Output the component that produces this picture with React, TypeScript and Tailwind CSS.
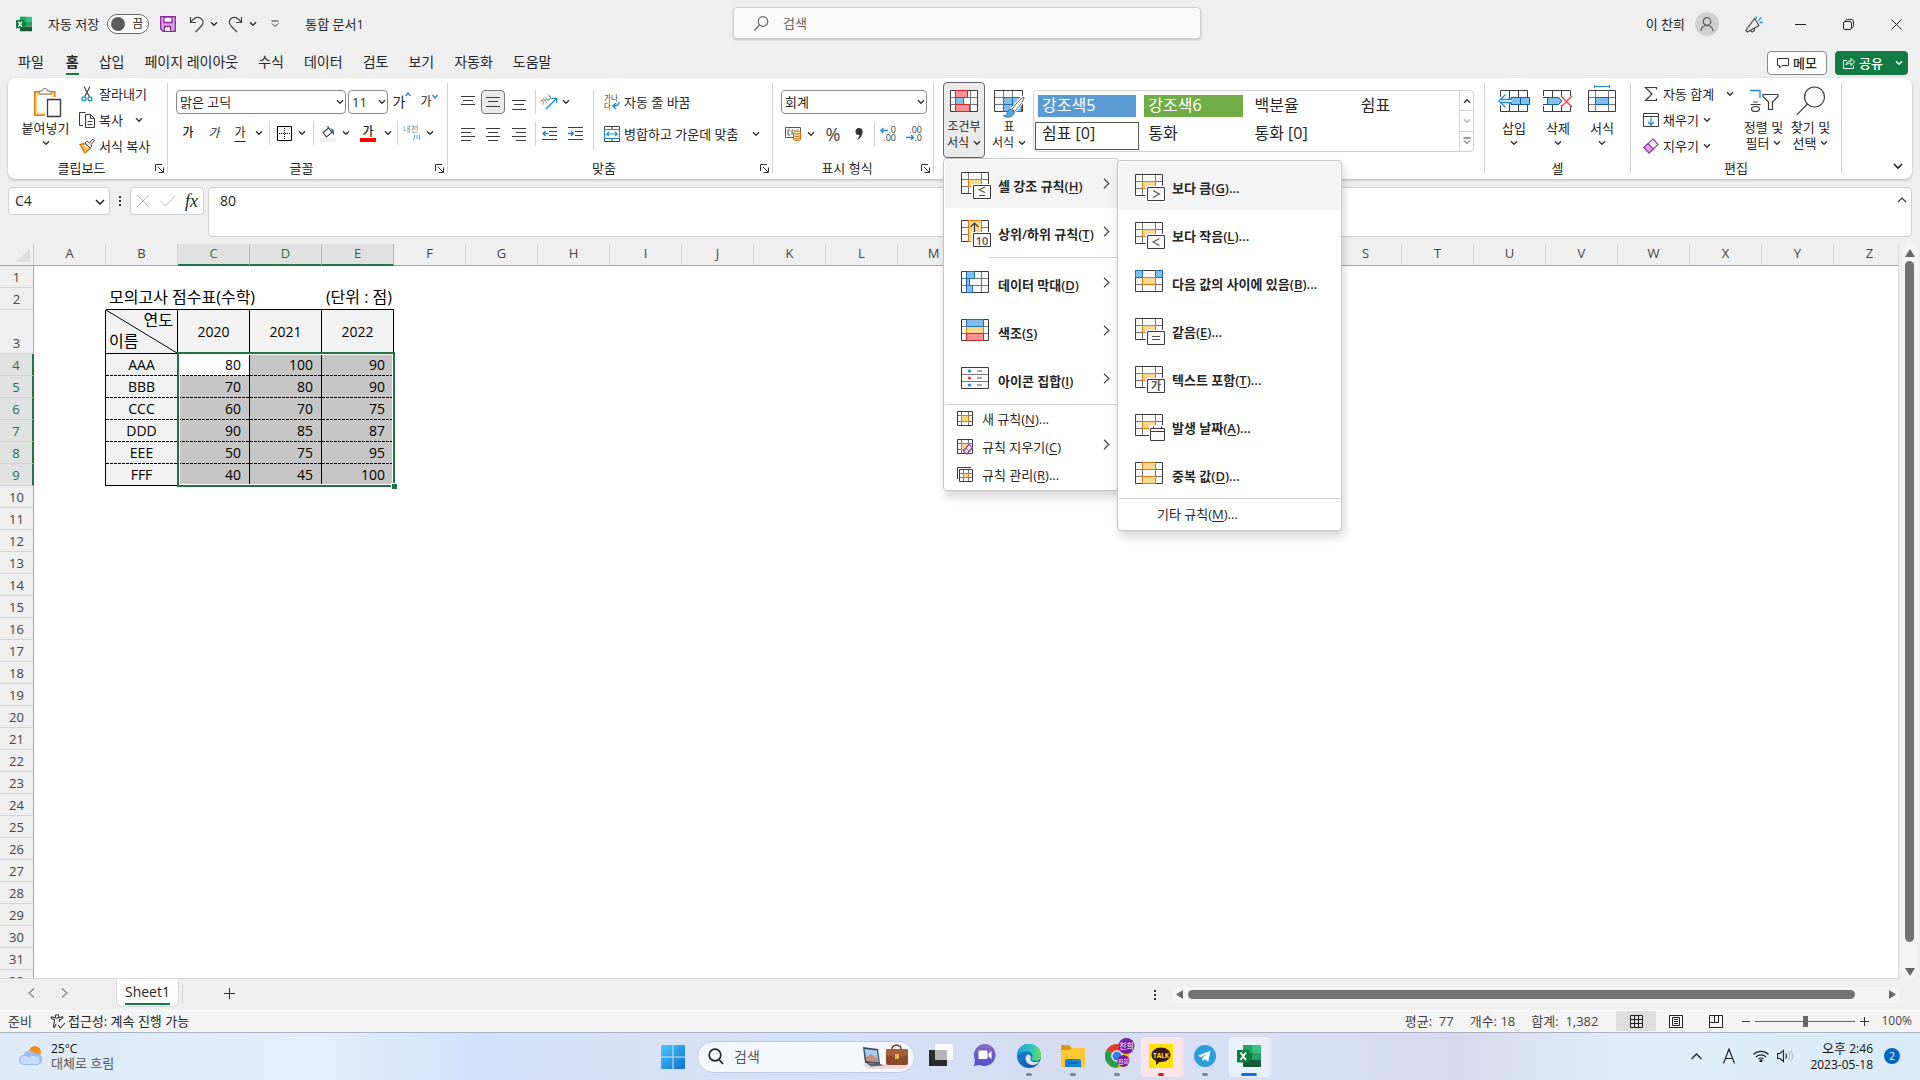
import React, { type ReactNode } from 'react';

/* ---------- small shared pieces ---------- */

function Chevron({ className = 'text-[#333]' }: { className?: string }) {
  return (
    <svg width="8" height="6" viewBox="0 0 8 6" className={`shrink-0 ${className}`} fill="none" stroke="currentColor" strokeWidth="1.4">
      <path d="M1 1.2 4 4.2 7 1.2" />
    </svg>
  );
}

function IconButton({ label, width = 'w-[26px]', children }: { label: string; width?: string; children: ReactNode }) {
  return (
    <button type="button" aria-label={label} className={`flex h-6 shrink-0 items-center justify-center ${width}`}>
      {children}
    </button>
  );
}

function Drop({ label, width = 'w-[14px]' }: { label: string; width?: string }) {
  return (
    <IconButton label={label} width={width}>
      <Chevron />
    </IconButton>
  );
}

function Divider({ className = 'h-6' }: { className?: string }) {
  return <span className={`w-px shrink-0 bg-[#d1d1d1] ${className}`} />;
}

function Group({ title, width, launcher = false, children }: { title: string; width: string; launcher?: boolean; children: ReactNode }) {
  return (
    <section aria-label={title} className={`flex shrink-0 ${width}`}>
      <div className="flex min-w-0 flex-1 flex-col">
        <div className="h-[82px]">{children}</div>
        <div className="flex h-4 items-center">
          <span className="flex-1 text-center">{title}</span>
          {launcher && (
            <button type="button" aria-label={`${title} 설정`} className="w-3">
              <svg width="9" height="9" viewBox="0 0 9 9" fill="none" stroke="#333">
                <path d="M.5 7V.5H7M3 3l5 5M8.500 3.500v5h-5" />
              </svg>
            </button>
          )}
        </div>
      </div>
      <Divider className="mt-[5px] h-[90px]" />
    </section>
  );
}

function Combo({ label, value, width }: { label: string; value: string; width: string }) {
  return (
    <span className={`relative flex h-6 shrink-0 ${width}`}>
      <select aria-label={label} className="h-6 w-full appearance-none rounded-[4px] border border-[#8a8a8a] bg-white pl-[3px] text-[13px] leading-5">
        <option>{value}</option>
      </select>
      <span className="pointer-events-none absolute top-[9px] right-[2px]">
        <Chevron />
      </span>
    </span>
  );
}

/* ---------- ribbon icons ---------- */

function PasteIcon() {
  return (
    <svg width="28" height="31" viewBox="0 0 28 31" fill="none" className="mt-[6px] ml-1">
      <path d="M.8 4.8h20v23.4H.8z" fill="#fbd98c" stroke="#e07b10" strokeWidth="1.5" />
      <path d="M3.5 8h14v17.500h-14z" fill="#fafafa" />
      <path d="M5 7V4h3.500a2.500 2.500 0 0 1 5 0H17v3z" fill="#fff" stroke="#777" />
      <path d="M12.500 11.500h14v18h-14z" fill="#fafafa" stroke="#fff" strokeWidth="3" />
      <path d="M13.500 12.500h13v17h-13z" fill="#fafafa" stroke="#3b3b3b" strokeWidth="1.3" />
    </svg>
  );
}

function CutIcon() {
  return (
    <svg width="16" height="16" viewBox="0 0 16 16" fill="none">
      <path d="M5 .5 10.500 11M11 .5 5.500 11" stroke="#444" strokeWidth="1.200" />
      <circle cx="5" cy="12.800" r="2" stroke="#1e8bd2" strokeWidth="1.300" />
      <circle cx="11" cy="12.800" r="2" stroke="#1e8bd2" strokeWidth="1.300" />
    </svg>
  );
}

function CopyIcon() {
  return (
    <svg width="16" height="16" viewBox="0 0 16 16" fill="none" stroke="#3b3b3b">
      <path d="M4 13.500H.5V.5h6" />
      <path d="M6.500 2.500h5l4 4v9h-9z" fill="#fafafa" />
      <path d="M11.500 2.500v4h4M8.500 9.500h5M8.500 12.500h5" />
    </svg>
  );
}

function BrushIcon() {
  return (
    <svg width="16" height="16" viewBox="0 0 16 16" fill="none">
      <path d="m1 6.500 5 8.500 5.500-5-5-4.500z" fill="#fbd98c" stroke="#d96c06" strokeWidth="1.300" />
      <path d="m3 10 2-1m-.5 3.500 2.500-2" stroke="#d96c06" />
      <path d="m6 5 2-2 2.500 2L14 1l1.500 1.500-3.500 4 1 1.500-2 2z" fill="#e8e8e8" stroke="#555" />
    </svg>
  );
}

function BordersIcon() {
  return (
    <svg width="15" height="15" viewBox="0 0 15 15" fill="none" stroke="#000">
      <path d="M.5.5h14v14H.5z" fill="#fafafa" />
      <path d="M7.500 2v11M2 7.500h11" strokeDasharray="1 1" />
    </svg>
  );
}

function FillIcon() {
  return (
    <svg width="16" height="17" viewBox="0 0 16 17" fill="none">
      <path d="M8.500 3 3 7.500 6.500 12 12 7.500 8 2V1" stroke="#444" strokeWidth="1.200" fill="#fafafa" />
      <path d="M10.500 3.500c3 0 4 2.500 3.500 6.500-1.500-.5-2-2-2-4z" fill="#1e6fb8" />
      <path d="M0 13h16v4H0z" fill="#efefef" />
    </svg>
  );
}

function Lines({ rows }: { rows: [number, number, number][] }) {
  return (
    <svg width="14" height="16" viewBox="0 0 14 16" stroke="#3b3b3b" strokeWidth="1">
      {rows.map(([x1, x2, y]) => (
        <path key={y} d={`M${x1} ${y + 0.5}H${x2}`} />
      ))}
    </svg>
  );
}

function IndentIcon({ out = false }: { out?: boolean }) {
  return (
    <svg width="15" height="14" viewBox="0 0 15 14" fill="none" stroke="#3b3b3b">
      <path d="M0 .5h15M7 4.500h8M7 8.500h8M0 12.500h15" />
      <path d={out ? 'M6.500 6.500H1M3.500 4 1 6.500 3.500 9' : 'M0 6.500h5.500M3 4l2.500 2.500L3 9'} stroke="#1e8bd2" strokeWidth="1.300" />
    </svg>
  );
}

function OrientationIcon() {
  return (
    <svg width="17" height="16" viewBox="0 0 17 16" fill="none" className="overflow-visible">
      <text x="0" y="9" fontSize="7" fill="#444" transform="rotate(-38 5 8)">가나</text>
      <path d="M5 15 15.500 4.500M11 4.300h4.700V9" stroke="#1e8bd2" strokeWidth="1.300" />
    </svg>
  );
}

function WrapIcon() {
  return (
    <svg width="16" height="16" viewBox="0 0 16 16" fill="none" className="overflow-visible">
      <text x="0" y="6.500" fontSize="7.500" fill="#333">가나</text>
      <text x="0" y="14.500" fontSize="7.500" fill="#333">다</text>
      <path d="M15 8c0 3-2 4-6 4M12 9l-3.200 3L12 15" stroke="#1e8bd2" strokeWidth="1.400" />
    </svg>
  );
}

function MergeIcon() {
  return (
    <svg width="16" height="16" viewBox="0 0 16 16" fill="none">
      <path d="M.5.5h15v15H.5zM8 .5v3M8 12.500v3" stroke="#3b3b3b" />
      <path d="M.5 3.500h15v9H.5z" fill="#fff" stroke="#1e8bd2" />
      <path d="M3 8h10M5 5.800 2.800 8 5 10.200M11 5.800 13.200 8 11 10.200" stroke="#1e8bd2" strokeWidth="1.200" />
    </svg>
  );
}

function CurrencyIcon() {
  return (
    <svg width="17" height="14" viewBox="0 0 17 14" fill="none">
      <path d="M.5.5h15v10H.5z" stroke="#555" />
      <path d="M5 3H3v5h2M8 3h-1v5M10 3v2M12.500 3h1" stroke="#555" />
      <path d="M8.500 5.500c0-2 7-2 7 0v7c0 1.500-7 1.500-7 0z" fill="#fbe3c0" stroke="#d96c06" />
      <path d="M8.500 6c1 1.300 6 1.300 7 0M8.500 8.500c1 1.300 6 1.300 7 0M8.500 11c1 1.300 6 1.300 7 0" stroke="#d96c06" />
    </svg>
  );
}

function DecimalIcon({ more = false }: { more?: boolean }) {
  return (
    <svg width="16" height="16" viewBox="0 0 16 16" fill="none" className="overflow-visible">
      <text x="16" y="7" fontSize="9" textAnchor="end" fill="#333">{more ? '.0' : '.00'}</text>
      <text x="16" y="15" fontSize="9" textAnchor="end" fill="#333">{more ? '.00' : '.0'}</text>
      <path d={more ? 'M8 4.500H1M3.500 2 1 4.500 3.500 7' : 'M0 11.500h7M5 9l2.500 2.500L5 14'} stroke="#1e8bd2" strokeWidth="1.300" />
    </svg>
  );
}

function GridLines() {
  return (
    <>
      <path d="M.5.5h27v21H.5z" fill="#fafafa" stroke="#3b3b3b" />
      <path d="M7.500 1v20M20.500 1v20M1 7.500h26M1 14.500h26" stroke="#777" />
    </>
  );
}

function ConditionalIcon() {
  return (
    <svg width="28" height="22" viewBox="0 0 28 22" fill="none">
      <GridLines />
      <path d="M13.500 1v20" stroke="#777" />
      <path d="M5.500 7.500h8v7h-8z" fill="#83beec" stroke="#1e6fb8" />
      <path d="M5.500.5h12v7h-12zM5.500 14.500h14v7h-14z" fill="#ff9199" stroke="#e02020" />
    </svg>
  );
}

function TableStyleIcon() {
  return (
    <svg width="31" height="28" viewBox="0 0 31 28" fill="none">
      <path d="M.5.500h28v21H.5z" fill="#fafafa" stroke="#3b3b3b" />
      <path d="M9.500 7.500h18v14h-18z" fill="#83beec" />
      <path d="M9.500 1v20M18.500 1v20M1 7.500h27M1 14.500h27" stroke="#777" />
      <path d="M9.500 7.500h18v14h-18zM18.500 7.500v14M9.500 14.500h18" stroke="#1e6fb8" />
      <path d="M29.500 7c-2.500 1-9.500 9-11.500 12.500l2.500 2C24 18 29.500 11 30 8z" fill="#fafafa" stroke="#fff" strokeWidth="3" />
      <path d="M29.500 7c-2.500 1-9.500 9-11.500 12.500l2.500 2C24 18 29.500 11 30 8z" fill="#fafafa" stroke="#555" />
      <path d="M17.500 19.500c-4-.5-4 3-5 5-.7 1-2 1-3 1 2 2.500 9 2.500 11-3z" fill="#5aa9e6" stroke="#1e6fb8" />
    </svg>
  );
}

function InsertIcon() {
  return (
    <svg width="32" height="22" viewBox="0 0 32 22" fill="none" className="mt-[9px]">
      <path d="M2.500.5h27v21h-27zM11.500.5v21M20.500.5v21" stroke="#3b3b3b" fill="#fafafa" />
      <path d="M13 7.500h18.500v7H13zM22.500 7.500v7" fill="#83beec" stroke="#0f5ea8" />
      <path d="M14 11H2M7.500 4.500 1 11l6.500 6.500" stroke="#fff" strokeWidth="4" />
      <path d="M14 9.500H3M14 12.500H3M7.500 4.500 1 11l6.500 6.500" stroke="#1e8bd2" strokeWidth="1.300" />
    </svg>
  );
}

function DeleteIcon() {
  return (
    <svg width="30" height="22" viewBox="0 0 30 22" fill="none" className="mt-[9px]">
      <path d="M.5 6V.5h27V6M.5 16v5.500h27V16M9.500.5V7M18.500.5V7M9.500 15v6.500M18.500 15v6.500" stroke="#3b3b3b" />
      <path d="M0 7.500h5M0 14.500h5" stroke="#3b3b3b" />
      <path d="M4.500 7.500h11l3.500 3.500-3.500 3.500h-11z" fill="#83beec" stroke="#0f5ea8" />
      <path d="m18 6 11 11M29 6 18 17" stroke="#f04f56" strokeWidth="1.500" />
    </svg>
  );
}

function FormatIcon() {
  return (
    <svg width="28" height="27" viewBox="0 0 28 27" fill="none" className="mt-1">
      <path d="M6 1.500h16M6.500 0v3M21.500 0v3" stroke="#1e8bd2" />
      <path d="M.5 5.500h27v21H.5z" fill="#fafafa" stroke="#3b3b3b" />
      <path d="M7.500 6v20M20.500 6v20M1 12.500h26M1 19.500h26" stroke="#777" />
      <path d="M7.500 12.500h13v7h-13z" fill="#83beec" stroke="#0f5ea8" />
    </svg>
  );
}

function SigmaIcon() {
  return (
    <svg width="16" height="16" viewBox="0 0 16 16" fill="none" stroke="#3b3b3b" strokeWidth="1.200">
      <path d="M13.500 3.500v-2h-11L9 8l-6.500 6.500h11v-2" />
    </svg>
  );
}

function FillDownIcon() {
  return (
    <svg width="16" height="16" viewBox="0 0 16 16" fill="none">
      <path d="M.5 1.500h15v13H.5zM.5 4.500h15" stroke="#3b3b3b" />
      <path d="M8 5.500v7M5 10l3 3 3-3" stroke="#1e8bd2" strokeWidth="1.300" />
    </svg>
  );
}

function EraserIcon() {
  return (
    <svg width="16" height="16" viewBox="0 0 16 16" fill="none" stroke="#9a3fa6" strokeWidth="1.200">
      <path d="M10 1 15 6.500 6 15 1 9.500z" fill="#fff" />
      <path d="M5 5.500 10.500 11 6 15 1 9.500z" fill="#d9a3e0" />
    </svg>
  );
}

function SortFilterIcon() {
  return (
    <svg width="30" height="25" viewBox="0 0 30 25" fill="none" className="mt-[7px]">
      <path d="M1 2.500h10V10" stroke="#1e8bd2" strokeWidth="1.300" />
      <path d="M4 14h5M1.500 16.500h10" stroke="#3b3b3b" />
      <ellipse cx="6.500" cy="21" rx="4" ry="2.500" stroke="#3b3b3b" strokeWidth="1.200" />
      <path d="M14 6.500h15v2L23.500 14v7.500h-4V14L14 8.500z" stroke="#3b3b3b" strokeWidth="1.200" fill="#fafafa" />
    </svg>
  );
}

function FindIcon() {
  return (
    <svg width="30" height="30" viewBox="0 0 30 30" fill="none" stroke="#3b3b3b" strokeWidth="1.200" className="mt-[5px]">
      <circle cx="18.500" cy="11" r="10" fill="#fafafa" />
      <path d="M11.500 18 .8 28.800" />
    </svg>
  );
}

/* ---------- menu icons ---------- */

type MenuArt = 'gt' | 'lt' | 'le' | 'eq' | 'text' | 'date' | 'ten' | 'bars' | 'scales' | 'icons' | 'between' | 'dup';

function MenuIcon({ kind }: { kind: MenuArt }) {
  const boxed = ['gt', 'lt', 'le', 'eq', 'text', 'date'].includes(kind);
  const glyph: Partial<Record<MenuArt, string>> = {
    gt: 'm18 16.500 6.500 3.500-6.500 3.500',
    lt: 'm24.500 16.500-6.500 3.500 6.500 3.500',
    le: 'm24 15-6 2.700 6 2.700M18 23.500h6',
    eq: 'M17 18.500h8M17 21.500h8',
  };
  return (
    <svg width="31" height="28" viewBox="0 0 31 28" fill="none" className="shrink-0">
      <GridLines />
      {boxed && <path d="M7.500 7.500h13v7h-13z" fill="#fbd98c" stroke="#e07b10" />}
      {kind === 'ten' && (
        <>
          <path d="M7.500.5h13v21h-13z" fill="#fbd98c" stroke="#e07b10" />
          <path d="M13.500 12V3M9.500 7l4-4 4 4" stroke="#3b3b3b" strokeWidth="1.200" />
        </>
      )}
      {(boxed || kind === 'ten') && kind !== 'date' && (
        <>
          <path d="M10.500 12h20v16h-20z" fill="#fff" />
          <path d="M12.500 13.500h17v13h-17z" fill="#fafafa" stroke="#3b3b3b" />
        </>
      )}
      {glyph[kind] && <path d={glyph[kind]} stroke="#555" strokeWidth="1.100" />}
      {kind === 'ten' && <text x="21" y="24.500" fontSize="11" textAnchor="middle" fill="#555">10</text>}
      {kind === 'text' && <text x="21" y="24" fontSize="11" textAnchor="middle" fill="#555">가</text>}
      {kind === 'date' && (
        <>
          <path d="M14 11h17v17H14z" fill="#fff" />
          <path d="M15.500 14.500h14v12h-14zM15.500 17.500h14M18.500 12.500v2M26.500 12.500v2" fill="#fafafa" stroke="#3b3b3b" />
        </>
      )}
      {kind === 'bars' && <path d="M5.500.5h8v7h-8zM5.500 7.500h3v7h-3zM5.500 14.500h6v7h-6z" fill="#83beec" stroke="#1e6fb8" />}
      {kind === 'scales' && (
        <>
          <path d="M5.500 7.500h17v7h-17z" fill="#fbd98c" stroke="#e07b10" />
          <path d="M5.500.5h17v7h-17z" fill="#83beec" stroke="#1e6fb8" />
          <path d="M5.500 14.500h17v7h-17z" fill="#ff9199" stroke="#e02020" />
        </>
      )}
      {kind === 'icons' && (
        <>
          <path d="M5 1h16v6H5zM5 8h16v6H5zM5 15h16v6H5z" fill="#fafafa" />
          <path d="M16 4h5M16 11h5M16 18h5" stroke="#555" />
          <circle cx="8.500" cy="4" r="1.600" fill="#1e8bd2" />
          <circle cx="8.500" cy="11" r="1.600" fill="#e23b3b" />
          <circle cx="8.500" cy="18" r="1.600" fill="#1e8bd2" />
        </>
      )}
      {kind === 'between' && (
        <>
          <path d="M.5.5h7v7h-7zM20.500.5h7v7h-7z" fill="#83beec" stroke="#1e6fb8" />
          <path d="M7.500 7.500h13v7h-13z" fill="#fbd98c" stroke="#e07b10" />
        </>
      )}
      {kind === 'dup' && <path d="M7.500.5h13v7h-13zM7.500 14.500h13v7h-13z" fill="#fbd98c" stroke="#e07b10" />}
    </svg>
  );
}

function SmallRuleIcon({ kind }: { kind: 'new' | 'clear' | 'manage' }) {
  const inset = kind === 'manage' ? 2 : 0;
  return (
    <svg width="16" height="16" viewBox="0 0 16 16" fill="none" className="shrink-0">
      {inset > 0 && <path d="M.5 12V.5H14" stroke="#3b3b3b" />}
      <path d={`M${inset + 0.5} ${inset + 0.5}H15.500V14.500H${inset + 0.5}z`} fill="#fafafa" stroke="#3b3b3b" />
      <path d={`M${inset + 4.5} ${inset + 1}V14M11.500 ${inset + 1}V14M${inset + 1} ${inset + 4.5}H15M${inset + 1} 10.500H15`} stroke="#777" />
      <path d={`M${inset + 4.5} ${inset + 4.5}H11.500V10.500H${inset + 4.5}z`} fill="#fbd98c" stroke="#e07b10" />
      {kind === 'clear' && <path d="m12 5.500 3.500 3L10 15l-3.500-3z" fill="#fff" stroke="#9a3fa6" strokeWidth="1.300" />}
      {kind === 'clear' && <path d="m9 9 3 3" stroke="#9a3fa6" />}
    </svg>
  );
}

function MenuText({ text, hot, more }: { text: string; hot: string; more?: boolean }) {
  return (
    <span className="whitespace-nowrap">
      {text}(<u className="underline-offset-2">{hot}</u>){more && '...'}
    </span>
  );
}

function MenuArrow() {
  return (
    <svg width="7" height="11" viewBox="0 0 7 11" fill="none" stroke="#444" strokeWidth="1.200" className="mr-[7px] mb-[5px] ml-auto">
      <path d="m1 .8 4.800 4.700L1 10.200" />
    </svg>
  );
}

const RULE_MENU: { art: MenuArt; text: string; hot: string }[] = [
  { art: 'le', text: '셀 강조 규칙', hot: 'H' },
  { art: 'ten', text: '상위/하위 규칙', hot: 'T' },
  { art: 'bars', text: '데이터 막대', hot: 'D' },
  { art: 'scales', text: '색조', hot: 'S' },
  { art: 'icons', text: '아이콘 집합', hot: 'I' },
];

const HIGHLIGHT_MENU: { art: MenuArt; text: string; hot: string }[] = [
  { art: 'gt', text: '보다 큼', hot: 'G' },
  { art: 'lt', text: '보다 작음', hot: 'L' },
  { art: 'between', text: '다음 값의 사이에 있음', hot: 'B' },
  { art: 'eq', text: '같음', hot: 'E' },
  { art: 'text', text: '텍스트 포함', hot: 'T' },
  { art: 'date', text: '발생 날짜', hot: 'A' },
  { art: 'dup', text: '중복 값', hot: 'D' },
];

function HighlightMenu() {
  return (
    <div role="menu" className="absolute top-px left-[173px] z-30 w-[225px] rounded-[4px] border border-[#c6c6c6] bg-white p-px shadow-[2px_6px_10px_rgba(0,0,0,0.16)]">
      {HIGHLIGHT_MENU.map((item, i) => (
        <button key={item.hot} type="button" role="menuitem" className={`flex h-12 w-full items-center gap-[6px] pt-1 pl-4 font-semibold ${i === 0 ? 'bg-[#f4f4f4]' : ''}`}>
          <MenuIcon kind={item.art} />
          <MenuText text={item.text} hot={item.hot} more />
        </button>
      ))}
      <hr className="border-[#d1d1d1]" />
      <button type="button" role="menuitem" className="flex h-[30px] w-full items-center pl-[38px]">
        <MenuText text="기타 규칙" hot="M" more />
      </button>
    </div>
  );
}

function RuleMenu() {
  return (
    <div role="menu" className="absolute top-[76px] left-0 z-20 w-[176px] rounded-[4px] border border-[#c6c6c6] bg-white p-px shadow-[2px_6px_10px_rgba(0,0,0,0.16)]">
      {RULE_MENU.map((item, i) => (
        <React.Fragment key={item.hot}>
          {i === 2 && <hr className="my-px ml-11 border-[#d1d1d1]" />}
          <button type="button" role="menuitem" className={`flex h-12 w-full items-center gap-[6px] pt-1 pl-4 font-semibold ${i === 0 ? 'bg-[#f4f4f4]' : ''}`}>
            <MenuIcon kind={item.art} />
            <MenuText text={item.text} hot={item.hot} />
            <MenuArrow />
          </button>
        </React.Fragment>
      ))}
      <hr className="mt-px border-[#d1d1d1]" />
      <button type="button" role="menuitem" className="flex h-7 w-full items-center gap-[9px] pl-3">
        <SmallRuleIcon kind="new" />
        <MenuText text="새 규칙" hot="N" more />
      </button>
      <button type="button" role="menuitem" className="flex h-7 w-full items-center gap-[9px] pl-3">
        <SmallRuleIcon kind="clear" />
        <MenuText text="규칙 지우기" hot="C" />
        <MenuArrow />
      </button>
      <button type="button" role="menuitem" className="flex h-7 w-full items-center gap-[9px] pl-3">
        <SmallRuleIcon kind="manage" />
        <MenuText text="규칙 관리" hot="R" more />
      </button>
      <HighlightMenu />
    </div>
  );
}

/* ---------- title bar and tabs ---------- */

function ExcelLogo({ size }: { size: number }) {
  return (
    <svg width={size} height={size} viewBox="0 0 24 24" className="shrink-0">
      <path d="M6 1h9v7.500H6z" fill="#21a366" />
      <path d="M15 1h8a1 1 0 0 1 1 1v6.500h-9z" fill="#33c481" />
      <path d="M6 8.500h9V16H6z" fill="#107c41" />
      <path d="M15 8.500h9V16h-9z" fill="#21a366" />
      <path d="M6 16h18v6a1 1 0 0 1-1 1H7a1 1 0 0 1-1-1z" fill="#185c37" />
      <rect y="6" width="12.500" height="12.500" rx="1" fill="#107c41" />
      <path d="m3.500 8.500 5.500 7.500M9 8.500 3.500 16" stroke="#fff" strokeWidth="1.900" />
    </svg>
  );
}

function TitleBar() {
  return (
    <header className="flex h-12 shrink-0 items-center">
      <div className="flex flex-1 items-center pl-4">
        <ExcelLogo size={16} />
        <label className="ml-4 flex items-center gap-2">
          자동 저장
          <input type="checkbox" role="switch" className="sr-only" />
          <span className="flex h-5 w-[42px] items-center justify-between rounded-full border border-[#666] bg-white pr-[5px] pl-[3px] text-xs leading-4">
            <span className="h-[14px] w-[14px] rounded-full bg-[#5c5c5c]" />끔
          </span>
        </label>
        <button type="button" aria-label="저장" className="ml-[11px]">
          <svg width="16" height="16" viewBox="0 0 16 16" fill="none" stroke="#8b2c9b" strokeWidth="1.300">
            <path d="M.7.7h14.600v14.600H3L.7 13z" fill="#d99fe2" />
            <path d="M4 1h8v5.500H4zM4.500 15v-4.500h6V15" fill="#fff" />
          </svg>
        </button>
        <button type="button" aria-label="실행 취소" className="ml-[13px] flex items-center gap-[6px]">
          <svg width="15" height="17" viewBox="0 0 15 17" fill="none" stroke="#444" strokeWidth="1.200">
            <path d="M1.500 1v5.500H7M1.800 6.300C5 2 9 .5 12 2.500c3 2.500 2.500 5.500 0 8L6.500 16" />
          </svg>
          <Chevron />
        </button>
        <button type="button" aria-label="다시 실행" className="ml-[10px] flex items-center gap-[6px]">
          <svg width="15" height="17" viewBox="0 0 15 17" fill="none" stroke="#444" strokeWidth="1.200">
            <path d="M13.500 1v5.500H8M13.200 6.300C10 2 6 .5 3 2.500.5 5 1 7.500 3 10l6 6" />
          </svg>
          <Chevron />
        </button>
        <button type="button" aria-label="빠른 실행 도구 모음 사용자 지정" className="ml-[14px]">
          <svg width="8" height="8" viewBox="0 0 8 8" fill="none" stroke="#333">
            <path d="M.5 1h7M1 3.500l3 3 3-3" />
          </svg>
        </button>
        <h1 className="ml-[26px]">통합 문서1</h1>
      </div>
      <label className="mb-[2px] ml-4 flex h-8 w-[468px] items-center rounded-[4px] border border-[#d0d0d0] bg-[#fafafa] pl-5 shadow-[0_1px_2px_rgba(0,0,0,0.2)]">
        <svg width="15" height="15" viewBox="0 0 15 15" fill="none" stroke="#666" strokeWidth="1.200">
          <circle cx="9" cy="5.500" r="4.800" />
          <path d="M5.500 9 .5 14.500" />
        </svg>
        <input type="search" aria-label="검색" placeholder="검색" className="ml-[14px] flex-1 bg-transparent outline-none placeholder:text-[#666]" />
      </label>
      <div className="flex flex-1 items-center justify-end pr-[18px]">
        <span>이 찬희</span>
        <button type="button" aria-label="계정" className="ml-[10px] flex h-6 w-6 justify-center rounded-full bg-[#d0d0d0] pt-[5px]">
          <svg width="14" height="14" viewBox="0 0 14 14" fill="none" stroke="#555" strokeWidth="1.200">
            <circle cx="7" cy="4.500" r="3.800" />
            <path d="M.8 14C1.500 10.500 4 8.500 7 8.500s5.500 2 6.200 5.500" />
          </svg>
        </button>
        <button type="button" aria-label="새로운 기능" className="ml-[26px]">
          <svg width="18" height="17" viewBox="0 0 18 17" fill="none" stroke="#444" strokeWidth="1.100">
            <path d="M9.500 2.500.8 14.500 2.500 16 14 9.500zM5.500 14.500c1.500 2.500 4.500 1 4-2" />
            <path d="M11.500 3 11.200.5M13.500 4.500 16.500 1.500M14.500 6.500h3" stroke="#1e8bd2" strokeWidth="1.300" />
          </svg>
        </button>
        <button type="button" aria-label="최소화" className="ml-8">
          <svg width="11" height="11" viewBox="0 0 11 11" stroke="#222"><path d="M0 5.500h11" /></svg>
        </button>
        <button type="button" aria-label="이전 크기로 복원" className="ml-[37px]">
          <svg width="11" height="11" viewBox="0 0 11 11" fill="none" stroke="#222">
            <rect x=".5" y="2.500" width="8" height="8" rx="1.500" />
            <path d="M2.500 2.300C2.500 1 3.300.5 4.500.5H8c1.600 0 2.500.9 2.500 2.500v3.500c0 1.200-.5 2-1.800 2" />
          </svg>
        </button>
        <button type="button" aria-label="닫기" className="ml-[37px]">
          <svg width="11" height="11" viewBox="0 0 11 11" stroke="#222"><path d="m.5.5 10 10M10.500.5l-10 10" /></svg>
        </button>
      </div>
    </header>
  );
}

const TABS = ['파일', '홈', '삽입', '페이지 레이아웃', '수식', '데이터', '검토', '보기', '자동화', '도움말'];

function TabRow() {
  return (
    <nav className="flex h-[30px] shrink-0 items-center pr-3 pl-[18px] text-sm">
      <div role="tablist" className="flex h-full flex-1 gap-5">
        {TABS.map((tab) => (
          <button
            key={tab}
            type="button"
            role="tab"
            aria-selected={tab === '홈'}
            className={`flex h-[27px] items-center border-b-2 pt-[3px] leading-5 first:mr-[2px] ${tab === '홈' ? 'border-[#107c41] font-semibold' : 'border-transparent'}`}
          >
            {tab}
          </button>
        ))}
      </div>
      <button type="button" className="flex h-6 w-[60px] items-center justify-center gap-1 rounded-[4px] border border-[#8a8a8a] bg-white text-[13px] font-medium">
        <svg width="12" height="11" viewBox="0 0 12 11" fill="none" stroke="#333"><path d="M.5.5h11v7H5l-2.500 2.500V7.500h-2z" /></svg>
        메모
      </button>
      <button type="button" className="ml-2 flex h-6 w-[73px] items-center rounded-[4px] bg-[#107c41] pl-2 text-[13px] font-medium text-white">
        <svg width="12" height="12" viewBox="0 0 12 12" fill="none" stroke="#fff">
          <path d="M4 3.500H.5v8h10v-3M3 8c.5-3 2-4 5-4V1.500L11.500 5 8 8.500V6C6 6 4.500 6.500 3 8z" />
        </svg>
        <span className="ml-1">공유</span>
        <Chevron className="ml-3 text-white" />
      </button>
    </nav>
  );
}

/* ---------- ribbon ---------- */

function BigButton({ icon, lines, width, inlineDrop = false }: { icon: ReactNode; lines: string[]; width: string; inlineDrop?: boolean }) {
  return (
    <button type="button" className={`flex shrink-0 flex-col items-center ${width}`}>
      <span className={`flex items-start justify-center ${inlineDrop ? 'h-[38px]' : 'h-[39px]'}`}>{icon}</span>
      {lines.map((line, i) => (
        <span key={line} className="flex h-4 items-center gap-1 whitespace-nowrap">
          {line}
          {inlineDrop && i === lines.length - 1 && <Chevron />}
        </span>
      ))}
      {!inlineDrop && (
        <span className="flex h-[14px] items-center">
          <Chevron />
        </span>
      )}
    </button>
  );
}

function StyleCell({ name, tone }: { name: string; tone: string }) {
  return (
    <button type="button" className={`flex text-base leading-5 ${tone}`}>
      {name}
    </button>
  );
}

function Ribbon() {
  return (
    <div className="mx-2 flex h-[101px] shrink-0 rounded-lg bg-white shadow-[0_1px_3px_rgba(0,0,0,0.25)]">
      <Group title="클립보드" width="w-[160px]" launcher>
        <div className="flex pt-[3px]">
          <BigButton icon={<PasteIcon />} lines={['붙여넣기']} width="w-[71px] pl-1" />
          <div className="flex flex-col">
            <button type="button" className="flex h-[26px] items-center gap-1"><CutIcon />잘라내기</button>
            <button type="button" className="flex h-[26px] items-center gap-1"><CopyIcon />복사<span className="ml-2"><Chevron /></span></button>
            <button type="button" className="flex h-[26px] items-center gap-1"><BrushIcon />서식 복사</button>
          </div>
        </div>
      </Group>

      <Group title="글꼴" width="w-[280px]" launcher>
        <div className="flex items-center gap-[2px] pt-3 pl-2">
          <Combo label="글꼴" value="맑은 고딕" width="w-[170px]" />
          <Combo label="글꼴 크기" value="11" width="w-[40px]" />
          <IconButton label="글꼴 크기 크게" width="w-6">
            <span className="flex items-start text-sm">가<svg width="6" height="5" viewBox="0 0 6 5" fill="none" stroke="#1e8bd2" strokeWidth="1.300"><path d="M.5 4 3 1l2.500 3" /></svg></span>
          </IconButton>
          <IconButton label="글꼴 크기 작게">
            <span className="flex items-start text-xs">가<svg width="6" height="5" viewBox="0 0 6 5" fill="none" stroke="#1e8bd2" strokeWidth="1.300"><path d="M.5 1 3 4l2.500-3" /></svg></span>
          </IconButton>
        </div>
        <div className="flex items-center pt-[7px] pl-[7px] text-xs">
          <IconButton label="굵게"><span className="font-medium">가</span></IconButton>
          <IconButton label="기울임꼴"><i>가</i></IconButton>
          <IconButton label="밑줄"><u className="underline-offset-4">가</u></IconButton>
          <Drop label="밑줄 종류" width="w-3" />
          <Divider className="mx-1 h-6" />
          <IconButton label="테두리" width="w-5"><BordersIcon /></IconButton>
          <Drop label="테두리 종류" width="w-4" />
          <Divider className="mx-[3px] h-6" />
          <IconButton label="채우기 색" width="w-[22px]"><FillIcon /></IconButton>
          <Drop label="채우기 색 선택" />
          <IconButton label="글꼴 색" width="w-[30px]">
            <span className="flex flex-col items-center text-xs leading-[13px] font-medium">가<span className="h-1 w-4 bg-[#ff0000]" /></span>
          </IconButton>
          <Drop label="글꼴 색 선택" width="w-[10px]" />
          <Divider className="mx-1 h-6" />
          <IconButton label="윗주 필드" width="w-5">
            <svg width="18" height="18" viewBox="0 0 18 18" fill="none" className="overflow-visible">
              <text x="0" y="8" fontSize="8.500" fill="#888">내천</text>
              <path d="M11.500 10.500v3.500l-1.500 2M14 10.500V15M16.500 10.500v5.500" stroke="#5aa9e6" />
            </svg>
          </IconButton>
          <Drop label="윗주 선택" width="w-4" />
        </div>
      </Group>

      <Group title="맞춤" width="w-[325px]" launcher>
        <div className="flex">
          <div className="w-[145px] shrink-0 pl-[7px]">
            <div className="flex items-center pt-3">
              <IconButton label="위쪽 맞춤"><Lines rows={[[0, 14, 2], [2, 12, 6], [0, 14, 10]]} /></IconButton>
              <button type="button" aria-label="가운데 맞춤" aria-pressed="true" className="flex h-6 w-6 items-center justify-center rounded-[4px] border border-[#777] bg-[#eaeaea]">
                <Lines rows={[[0, 14, 3], [2, 12, 7], [0, 14, 12]]} />
              </button>
              <IconButton label="아래쪽 맞춤" width="w-7"><Lines rows={[[0, 14, 6], [2, 12, 10], [0, 14, 15]]} /></IconButton>
              <Divider className="ml-[2px] h-6" />
              <IconButton label="방향" width="w-[26px]"><OrientationIcon /></IconButton>
              <Drop label="방향 선택" width="w-2" />
            </div>
            <div className="flex items-center pt-2">
              <IconButton label="왼쪽 맞춤"><Lines rows={[[0, 14, 2], [0, 10, 6], [0, 14, 10], [0, 10, 14]]} /></IconButton>
              <IconButton label="가로 가운데 맞춤" width="w-6"><Lines rows={[[0, 14, 2], [2, 12, 6], [0, 14, 10], [2, 12, 14]]} /></IconButton>
              <IconButton label="오른쪽 맞춤" width="w-7"><Lines rows={[[0, 14, 2], [4, 14, 6], [0, 14, 10], [4, 14, 14]]} /></IconButton>
              <Divider className="ml-[2px] h-6" />
              <IconButton label="내어쓰기"><IndentIcon out /></IconButton>
              <IconButton label="들여쓰기"><IndentIcon /></IconButton>
            </div>
          </div>
          <Divider className="mt-3 h-[60px]" />
          <div className="flex-1 pl-[10px]">
            <button type="button" className="mt-3 flex h-6 items-center gap-1"><WrapIcon />자동 줄 바꿈</button>
            <button type="button" className="mt-2 flex h-6 items-center gap-1"><MergeIcon />병합하고 가운데 맞춤<span className="ml-[10px]"><Chevron /></span></button>
          </div>
        </div>
      </Group>

      <Group title="표시 형식" width="w-[161px]" launcher>
        <div className="pt-3 pl-2">
          <Combo label="표시 형식" value="회계" width="w-[146px]" />
          <div className="flex items-center pt-2">
            <IconButton label="회계 표시 형식" width="w-6"><CurrencyIcon /></IconButton>
            <Drop label="회계 표시 형식 선택" width="w-3" />
            <IconButton label="백분율 스타일" width="w-8"><span className="text-lg leading-6 text-[#444]">%</span></IconButton>
            <IconButton label="쉼표 스타일" width="w-5">
              <svg width="8" height="13" viewBox="0 0 8 13" fill="#333"><circle cx="4" cy="3.500" r="3.500" /><path d="M7.500 3.500c0 4-2 7-6 9 2-2.500 3-4 3-6.500z" /></svg>
            </IconButton>
            <Divider className="ml-[5px] h-6" />
            <IconButton label="자릿수 늘림"><DecimalIcon more /></IconButton>
            <IconButton label="자릿수 줄임"><DecimalIcon /></IconButton>
          </div>
        </div>
      </Group>

      <section aria-label="스타일" className="flex w-[551px] shrink-0">
        <div className="flex flex-1 items-start pt-1 pl-[9px]">
          <div className="relative">
            <button type="button" aria-expanded="true" className="flex h-[76px] w-[42px] flex-col items-center rounded-[4px] border border-[#666] bg-[#eaeaea] pt-[7px] text-xs leading-4">
              <ConditionalIcon />
              <span className="mt-[7px] h-4 whitespace-nowrap">조건부</span>
              <span className="flex h-4 items-center gap-1 whitespace-nowrap">서식<Chevron /></span>
            </button>
            <RuleMenu />
          </div>
          <button type="button" className="flex h-[76px] w-[48px] flex-col items-center pt-2 text-xs leading-4">
            <span className="h-[29px]"><TableStyleIcon /></span>
            <span className="h-4">표</span>
            <span className="flex h-4 items-center gap-1 whitespace-nowrap">서식<Chevron /></span>
          </button>
          <div className="mt-2 flex h-[62px] w-[441px] rounded-[4px] border border-[#d1d1d1]">
            <div className="grid flex-1 grid-cols-4 grid-rows-2">
              <StyleCell name="강조색5" tone="m-1 bg-[#5b9bd5] pl-1 text-white" />
              <StyleCell name="강조색6" tone="m-1 bg-[#70ad47] pl-1 text-white" />
              <StyleCell name="백분율" tone="pt-1 pl-2" />
              <StyleCell name="쉼표" tone="pt-1 pl-2" />
              <StyleCell name="쉼표 [0]" tone="m-px border border-[#555] pl-[6px]" />
              <StyleCell name="통화" tone="pt-[2px] pl-2" />
              <StyleCell name="통화 [0]" tone="pt-[2px] pl-2" />
            </div>
            <div className="flex w-[14px] flex-col divide-y divide-[#d1d1d1] border-l border-[#d1d1d1]">
              <button type="button" aria-label="위로" className="flex flex-1 items-center justify-center"><Chevron className="rotate-180 text-[#333]" /></button>
              <button type="button" aria-label="아래로" className="flex flex-1 items-center justify-center"><Chevron className="text-[#bbb]" /></button>
              <button type="button" aria-label="스타일 더 보기" className="flex flex-1 items-center justify-center">
                <svg width="8" height="8" viewBox="0 0 8 8" fill="none" stroke="#333"><path d="M.5 1h7M1 3.500l3 3 3-3" /></svg>
              </button>
            </div>
          </div>
        </div>
        <Divider className="mt-[5px] h-[90px]" />
      </section>

      <Group title="셀" width="w-[146px]">
        <div className="flex pt-[3px] pl-[7px]">
          <BigButton icon={<InsertIcon />} lines={['삽입']} width="w-11" />
          <BigButton icon={<DeleteIcon />} lines={['삭제']} width="w-11" />
          <BigButton icon={<FormatIcon />} lines={['서식']} width="w-11" />
        </div>
      </Group>

      <Group title="편집" width="w-[211px]">
        <div className="flex pt-[3px] pl-3">
          <div className="flex w-[97px] shrink-0 flex-col">
            <button type="button" className="flex h-[26px] items-center gap-1"><SigmaIcon />자동 합계<span className="ml-2"><Chevron /></span></button>
            <button type="button" className="flex h-[26px] items-center gap-1"><FillDownIcon />채우기<Chevron /></button>
            <button type="button" className="flex h-[26px] items-center gap-1"><EraserIcon />지우기<Chevron /></button>
          </div>
          <BigButton icon={<SortFilterIcon />} lines={['정렬 및', '필터']} width="w-[47px]" inlineDrop />
          <BigButton icon={<FindIcon />} lines={['찾기 및', '선택']} width="w-[47px]" inlineDrop />
        </div>
      </Group>

      <div className="flex flex-1 items-end justify-end pr-[9px] pb-[9px]">
        <button type="button" aria-label="리본 메뉴 축소">
          <svg width="10" height="7" viewBox="0 0 10 7" fill="none" stroke="#222" strokeWidth="1.600"><path d="m1 1 4 4 4-4" /></svg>
        </button>
      </div>
    </div>
  );
}

/* ---------- formula bar ---------- */

function FormulaBar() {
  return (
    <div className="mx-2 mt-2 flex h-[50px] shrink-0 items-start">
      <span className="relative">
        <select aria-label="이름 상자" className="h-7 w-[102px] appearance-none rounded-[4px] border border-[#d1d1d1] bg-white pl-[6px] text-sm leading-5">
          <option>C4</option>
        </select>
        <svg width="10" height="7" viewBox="0 0 10 7" fill="none" stroke="#222" strokeWidth="1.500" className="pointer-events-none absolute top-3 right-[5px]"><path d="m1 1 4 4 4-4" /></svg>
      </span>
      <svg width="20" height="28" viewBox="0 0 20 28" fill="#333">
        <path d="M9 9h2v2H9zM9 13h2v2H9zM9 17h2v2H9z" />
      </svg>
      <div className="flex h-7 w-[74px] items-center justify-between rounded-[4px] border border-[#d1d1d1] bg-white px-[5px]">
        <button type="button" aria-label="취소"><svg width="14" height="14" viewBox="0 0 14 14" stroke="#b5b5b5"><path d="m1 1 12 12M13 1 1 13" /></svg></button>
        <button type="button" aria-label="입력"><svg width="16" height="12" viewBox="0 0 16 12" fill="none" stroke="#b5b5b5"><path d="m.5 6 5 5L15.500.5" /></svg></button>
        <button type="button" aria-label="함수 삽입" className="font-['Liberation_Serif'] text-lg leading-5 italic">fx</button>
      </div>
      <div className="ml-1 flex h-[50px] flex-1 items-start justify-between rounded-[4px] border border-[#d1d1d1] bg-white">
        <input aria-label="수식 입력줄" defaultValue="80" className="h-6 flex-1 bg-transparent pl-[11px] text-sm outline-none" />
        <button type="button" aria-label="수식 입력줄 축소" className="mt-2 mr-1">
          <svg width="10" height="7" viewBox="0 0 10 7" fill="none" stroke="#333" strokeWidth="1.200"><path d="m1 6 4-4 4 4" /></svg>
        </button>
      </div>
    </div>
  );
}

/* ---------- worksheet ---------- */

const COLUMNS = 'ABCDEFGHIJKLMNOPQRSTUVWXYZ'.split('');
const EMPTY_ROWS = Array.from({ length: 23 }, (_, i) => i + 10);
const SCORES: [string, number, number, number][] = [
  ['AAA', 80, 100, 90],
  ['BBB', 70, 80, 90],
  ['CCC', 60, 70, 75],
  ['DDD', 90, 85, 87],
  ['EEE', 50, 75, 95],
  ['FFF', 40, 45, 100],
];
const DASHED = 'bg-[repeating-linear-gradient(90deg,#000_0_3px,transparent_3px_4px)] bg-[length:100%_1px] bg-bottom bg-no-repeat';

function RowHead({ n, selected = false }: { n: number; selected?: boolean }) {
  return (
    <th
      scope="row"
      className={`border-b border-b-[#d4d4d4] p-0 align-bottom text-[13px] leading-[19px] font-normal ${
        selected ? 'border-r-2 border-r-[#217346] bg-[#e1e1e1] text-[#217346]' : 'border-r border-r-[#a6a6a6] bg-[#efefef] text-[#444]'
      }`}
    >
      {n}
    </th>
  );
}

function Selection() {
  return (
    <span className="pointer-events-none absolute -top-[2px] -left-px z-10 h-[135px] w-[218px] border-2 border-[#217346] shadow-[inset_0_0_0_1px_#fff]">
      <span className="absolute -right-1 -bottom-1 h-[6px] w-[6px] border-t border-l border-white bg-[#217346]" />
    </span>
  );
}

function Sheet() {
  return (
    <div className="min-w-0 flex-1 overflow-hidden border-r border-b border-[#d9d9d9] bg-white">
      <table className="w-[1906px] table-fixed border-separate border-spacing-0 text-sm leading-5 text-black">
        <colgroup>
          <col className="w-[34px]" />
          {COLUMNS.map((c) => (
            <col key={c} className="w-[72px]" />
          ))}
        </colgroup>
        <thead>
          <tr className="h-[22px]">
            <th aria-label="모두 선택" className="border-r border-b border-r-[#c8c8c8] border-b-[#a6a6a6] bg-[#efefef] p-0">
              <svg width="14" height="14" viewBox="0 0 14 14" className="ml-4"><path d="M14 0v14H0z" fill="#dcdcdc" /></svg>
            </th>
            {COLUMNS.map((c) => (
              <th
                key={c}
                scope="col"
                className={`p-0 align-top text-[13px] leading-[18px] font-normal ${
                  'CDE'.includes(c) ? 'border-r border-b-2 border-r-[#b5b5b5] border-b-[#217346] bg-[#e1e1e1] text-[#217346]' : 'border-r border-b border-r-[#d4d4d4] border-b-[#a6a6a6] bg-[#efefef] text-[#444]'
                }`}
              >
                {c}
              </th>
            ))}
          </tr>
        </thead>
        <tbody>
          <tr className="h-[22px]">
            <RowHead n={1} />
            <td colSpan={26} className="p-0" />
          </tr>
          <tr className="h-[22px]">
            <RowHead n={2} />
            <td className="p-0" />
            <td colSpan={3} className="border-b border-black p-0 pl-[3px] align-top text-base leading-[19px] whitespace-nowrap">모의고사 점수표(수학)</td>
            <td className="border-b border-black p-0 pr-[2px] align-top text-base leading-[19px] whitespace-nowrap">
              <span className="float-right">(단위 : 점)</span>
            </td>
            <td colSpan={21} className="p-0" />
          </tr>
          <tr className="h-11">
            <RowHead n={3} />
            <td className="border-r border-black p-0" />
            <td className="relative border-r border-b border-black bg-[#f2f2f2] p-0 align-top text-base">
              <svg className="absolute inset-0 h-full w-full" viewBox="0 0 71 43" preserveAspectRatio="none" stroke="#000"><path d="m0 0 71 43" /></svg>
              <div className="relative pr-1 text-right leading-5">연도</div>
              <div className="relative pl-[3px] leading-[23px]">이름</div>
            </td>
            {[2020, 2021, 2022].map((y) => (
              <td key={y} className="border-r border-b border-black bg-[#f2f2f2] p-0 text-center">{y}</td>
            ))}
            <td colSpan={22} className="p-0" />
          </tr>
          {SCORES.map(([name, ...values], r) => {
            const last = r === SCORES.length - 1;
            const edge = last ? 'border-b border-b-black' : DASHED;
            return (
              <tr key={name} className="h-[22px]">
                <RowHead n={r + 4} selected />
                <td className="border-r border-black p-0" />
                <td className={`border-r border-r-black bg-[#f2f2f2] p-0 text-center ${edge}`}>{name}</td>
                {values.map((v, c) => (
                  <td key={c} className={`relative border-r border-r-black p-0 pr-2 text-right ${edge} ${r === 0 && c === 0 ? 'bg-white' : 'bg-[#c6c6c6]'}`}>
                    {v}
                    {r === 0 && c === 0 && <Selection />}
                  </td>
                ))}
                <td colSpan={22} className="p-0" />
              </tr>
            );
          })}
          {EMPTY_ROWS.map((n) => (
            <tr key={n} className="h-[22px]">
              <RowHead n={n} />
              <td colSpan={26} className="p-0" />
            </tr>
          ))}
        </tbody>
      </table>
    </div>
  );
}

function VerticalScroll() {
  return (
    <div className="flex w-[21px] shrink-0 flex-col items-center">
      <div className="flex w-4 flex-1 flex-col items-center rounded-full bg-[#f5f5f5] pt-[5px] pb-[3px]">
        <svg width="10" height="8" viewBox="0 0 10 8" fill="#666"><path d="M5 0 10 8H0z" /></svg>
        <div className="mt-1 mb-[26px] w-[9px] flex-1 rounded-full bg-[#737373]" />
        <svg width="10" height="8" viewBox="0 0 10 8" fill="#666"><path d="M5 8 10 0H0z" /></svg>
      </div>
    </div>
  );
}

function SheetTabs() {
  return (
    <div className="flex h-8 shrink-0 items-start border-b border-white">
      <button type="button" aria-label="이전 시트" className="mt-[9px] ml-7"><svg width="7" height="10" viewBox="0 0 7 10" fill="none" stroke="#888" strokeWidth="1.300"><path d="M6 .5 1 5l5 4.500" /></svg></button>
      <button type="button" aria-label="다음 시트" className="mt-[9px] ml-[26px]"><svg width="7" height="10" viewBox="0 0 7 10" fill="none" stroke="#888" strokeWidth="1.300"><path d="m1 .5 5 4.500-5 4.500" /></svg></button>
      <div role="tablist" className="ml-12 flex items-start">
        <button type="button" role="tab" aria-selected="true" className="h-7 rounded-b-md border-r border-b border-l border-[#d9d9d9] bg-white px-2 text-sm leading-[22px]">
          <span className="block h-6 border-b-2 border-[#107c41]">Sheet1</span>
        </button>
        <Divider className="mt-[6px] ml-[3px] h-[18px]" />
      </div>
      <button type="button" aria-label="새 시트" className="mt-[9px] ml-[41px]"><svg width="11" height="11" viewBox="0 0 11 11" stroke="#333"><path d="M0 5.500h11M5.500 0v11" /></svg></button>
      <div className="mr-5 ml-auto flex h-4 w-[746px] items-center self-center">
        <svg width="2" height="10" viewBox="0 0 2 10" fill="#333"><path d="M0 0h2v2H0zM0 4h2v2H0zM0 8h2v2H0z" /></svg>
        <div className="ml-4 flex h-4 flex-1 items-center rounded-full bg-[#f5f5f5] pr-1 pl-1">
          <svg width="7" height="9" viewBox="0 0 7 9" fill="#666"><path d="M0 4.500 7 0v9z" /></svg>
          <div className="mr-[34px] ml-[5px] h-[9px] flex-1 rounded-full bg-[#737373]" />
          <svg width="7" height="9" viewBox="0 0 7 9" fill="#666"><path d="M7 4.500 0 0v9z" /></svg>
        </div>
      </div>
    </div>
  );
}

function StatusBar() {
  return (
    <footer className="flex h-[22px] shrink-0 items-center border-b border-[#a8b1bf] bg-[#f4f4f4] pr-2 pb-px pl-2 text-[#444]">
      <span>준비</span>
      <button type="button" className="ml-[18px] flex items-center gap-[2px] text-[#222]">
        <svg width="16" height="15" viewBox="0 0 16 15" fill="none" stroke="#333" strokeWidth="1.100">
          <circle cx="7" cy="2.500" r="1.800" />
          <path d="M1 3.500c0 1.500 3 2 3.500 2.500.5 1-1.500 6-1 7 1 1.200 2-1.500 2.500-3M13 3.500c0 1.500-3 2-3.500 2.500v2M1 3.500C1.500 2 3 3.500 5 4M13 3.500C12.500 2 11 3.500 9 4M8 11l2.500 3L15 9" />
        </svg>
        접근성: 계속 진행 가능
      </button>
      <span className="ml-auto">평균:&nbsp; 77</span>
      <span className="ml-4">개수: 18</span>
      <span className="ml-4">합계:&nbsp; 1,382</span>
      <button type="button" aria-label="기본" aria-pressed="true" className="ml-[18px] flex h-5 w-10 items-center justify-center bg-[#dedede]">
        <svg width="13" height="13" viewBox="0 0 13 13" fill="none" stroke="#222"><path d="M.5.5h12v12H.5zM4.500.5v12M8.500.5v12M.5 4.500h12M.5 8.500h12" /></svg>
      </button>
      <button type="button" aria-label="페이지 레이아웃" className="flex w-10 items-center justify-center">
        <svg width="14" height="13" viewBox="0 0 14 13" fill="none" stroke="#222"><path d="M.5.5h13v12H.5zM3.500 2.500h7v8h-7zM5 4.500h4M5 6.500h4M5 8.500h4" /></svg>
      </button>
      <button type="button" aria-label="페이지 나누기 미리 보기" className="flex w-10 items-center justify-center">
        <svg width="14" height="13" viewBox="0 0 14 13" fill="none" stroke="#222"><path d="M.5.5h13v12H.5zM5.500.5v7M.5 7.500h9M9.500.5v7" /></svg>
      </button>
      <button type="button" aria-label="축소" className="ml-[6px]"><svg width="8" height="9" viewBox="0 0 8 9" stroke="#333"><path d="M0 4.500h8" /></svg></button>
      <input
        type="range"
        aria-label="확대/축소"
        min="0"
        max="200"
        defaultValue="100"
        className="mx-[5px] h-3 w-[100px] appearance-none bg-[linear-gradient(#666,#666)] bg-[length:100%_1px] bg-center bg-no-repeat [&::-webkit-slider-thumb]:h-[11px] [&::-webkit-slider-thumb]:w-[5px] [&::-webkit-slider-thumb]:appearance-none [&::-webkit-slider-thumb]:bg-[#666]"
      />
      <button type="button" aria-label="확대"><svg width="9" height="9" viewBox="0 0 9 9" stroke="#333"><path d="M0 4.500h9M4.500 0v9" /></svg></button>
      <span className="ml-3 text-xs">100%</span>
    </footer>
  );
}

/* ---------- taskbar ---------- */

function TaskItem({ label, mark, tile = '', children }: { label: string; mark?: string; tile?: string; children: ReactNode }) {
  return (
    <button type="button" aria-label={label} className={`mx-[2px] flex h-10 w-10 flex-col items-center justify-end gap-[5px] rounded-[4px] pb-px ${tile}`}>
      {children}
      <span className={`h-[3px] rounded-full ${mark ?? 'w-[6px]'}`} />
    </button>
  );
}

function Taskbar() {
  return (
    <div className="grid h-[47px] shrink-0 grid-cols-[1fr_auto_1fr] items-center bg-[linear-gradient(90deg,#deebf6_0%,#e2eefa_17%,#d2e1fb_25%,#d8e1f5_34%,#d5e2fb_42%,#d6dcf0_55%,#d8e0f5_66%,#d6daee_76%,#e0edf9_84%,#dcebf8_100%)]">
      <button type="button" className="ml-[18px] flex items-center gap-2 pb-px text-left">
        <svg width="25" height="22" viewBox="0 0 25 22">
          <circle cx="17" cy="7" r="6" fill="#f28c1c" />
          <path d="M6 20a5.200 5.200 0 0 1-.5-10.300A6.500 6.500 0 0 1 17 8.500a5.500 5.500 0 0 1 2.500 11.500z" fill="#9dbcf0" />
          <path d="M6 19a4 4 0 0 1 1-8c2 0 3 1 4 2 1.500-2 4-2.500 6-1.500a4 4 0 0 1 2.500 7.500z" fill="#c9dcfb" />
        </svg>
        <span className="flex flex-col leading-[15px]">
          <span className="text-xs leading-[15px] text-[#111]">25°C</span>
          <span className="text-[#555]">대체로 흐림</span>
        </span>
      </button>
      <div className="flex items-center">
        <button type="button" aria-label="시작" className="flex w-11 justify-center pl-[3px]">
          <svg width="24" height="24" viewBox="0 0 24 24">
            <defs>
              <linearGradient id="winFill" x1="0" y1="0" x2="1" y2="1"><stop stopColor="#4cc8f8" /><stop offset="1" stopColor="#0a70cf" /></linearGradient>
            </defs>
            <path d="M0 1a1 1 0 0 1 1-1h10.500v11.500H0zM12.500 0H23a1 1 0 0 1 1 1v10.500H12.500zM0 12.500h11.500V24H1a1 1 0 0 1-1-1zM12.500 12.500H24V23a1 1 0 0 1-1 1H12.500z" fill="url(#winFill)" />
          </svg>
        </button>
        <label className="mx-1 flex h-8 w-[218px] items-center rounded-full border border-[#c3cbe0] bg-[#f4f8fe] pr-1 pl-[10px]">
          <svg width="16" height="17" viewBox="0 0 16 17" fill="none" stroke="#222" strokeWidth="1.700"><circle cx="7" cy="7" r="5.800" /><path d="m11 11.500 4 4.500" /></svg>
          <input type="search" aria-label="작업 표시줄 검색" placeholder="검색" className="ml-[10px] min-w-0 flex-1 bg-transparent text-sm outline-none placeholder:text-[#555]" />
          <svg width="48" height="26" viewBox="0 0 48 26">
            <path d="M1 20h46c0 4-4 5-8 5H9c-4 0-7-1-8-5z" fill="#e8ddd8" />
            <path d="m1 3 15 2 2 15-15-1z" fill="#3b4a63" />
            <path d="m2.500 5 12.500 1.500 1.500 11.500-12-1z" fill="#a9cdf0" />
            <path d="m4 13 5-3 7 5 .5 3-12-1z" fill="#c98f77" />
            <path d="m4 19 14 1 4 1.500-13 1z" fill="#55617a" />
            <path d="M30 5c0-5 9-5 9 0" fill="none" stroke="#7a3d22" strokeWidth="1.500" />
            <rect x="24" y="5" width="22" height="16" rx="2" fill="#8c4a2c" />
            <path d="M24 7c0-1.500 1-2 2-2h18c1 0 2 .5 2 2v4c-7 2.500-15 2.500-22 0z" fill="#a85e3a" />
            <rect x="33" y="10" width="4" height="5" fill="#e5b45a" />
          </svg>
        </label>
        <TaskItem label="작업 보기">
          <svg width="24" height="24" viewBox="0 0 24 24" className="mb-px">
            <path d="M0 7h18v16H0z" fill="#2a2a2a" />
            <path d="M6 1h18v16H6z" fill="#fafafa" />
            <path d="M6 7h12v10H6z" fill="#b5b5b5" />
          </svg>
        </TaskItem>
        <TaskItem label="채팅">
          <svg width="24" height="24" viewBox="0 0 24 24" className="mb-px">
            <defs><linearGradient id="chatFill" x1="0" y1="0" x2="0" y2="1"><stop stopColor="#8a6cc0" /><stop offset="1" stopColor="#4f52c8" /></linearGradient></defs>
            <path d="M12 1a11 11 0 1 1-5 21l-6 1 1-6A11 11 0 0 1 12 1z" fill="url(#chatFill)" />
            <rect x="5.500" y="7.500" width="9" height="8.500" rx="1.200" fill="#fff" />
            <path d="M15.500 10.500 18.500 8v8l-3-2.500z" fill="#fff" />
          </svg>
        </TaskItem>
        <TaskItem label="Edge" mark="w-[6px] bg-[#808894]">
          <svg width="24" height="24" viewBox="0 0 24 24">
            <defs>
              <linearGradient id="edgeTop" x1="0" y1="0" x2="1" y2="0"><stop stopColor="#1ba0e0" /><stop offset=".6" stopColor="#2fc6c0" /><stop offset="1" stopColor="#6de04e" /></linearGradient>
              <linearGradient id="edgeLow" x1="0" y1="0" x2="1" y2="1"><stop stopColor="#1490df" /><stop offset="1" stopColor="#0f4a96" /></linearGradient>
            </defs>
            <circle cx="12" cy="12" r="12" fill="url(#edgeLow)" />
            <path d="M0 12A12 12 0 0 1 24 11c.3 4-2.500 6-6 6-3 0-4.500-1-3.500-2.500C17 11 14 7.500 10 7.500 5 7.500 1 9 0 12z" fill="url(#edgeTop)" />
            <path d="M8.500 14c0-2.500 2-4 3.500-3.500 2.500 1 2.500 3 1.500 4.500-.5 1.500 2 3.500 5.500 3 2-.3 3-1 3.500-1-1.500 3-4.500 4.500-7.500 4-4-.5-6.500-3-6.500-7z" fill="#d8e3f8" />
          </svg>
        </TaskItem>
        <TaskItem label="파일 탐색기" mark="w-[6px] bg-[#808894]">
          <svg width="24" height="22" viewBox="0 0 24 22" className="mb-px">
            <path d="M0 1a1 1 0 0 1 1-1h7l3 3v5H0z" fill="#d99a10" />
            <path d="M0 5h9l2-2h12a1 1 0 0 1 1 1v17a1 1 0 0 1-1 1H1a1 1 0 0 1-1-1z" fill="#fcc934" />
            <path d="M4 22v-6c0-1 .7-2 2-2h12c1.300 0 2 1 2 2v6z" fill="#1583d6" />
            <path d="M8 18h8" stroke="#0a5aa0" strokeWidth="1.500" />
          </svg>
        </TaskItem>
        <TaskItem label="Chrome" mark="w-[6px] bg-[#808894]">
          <svg width="30" height="30" viewBox="0 0 30 30" className="ml-[6px] shrink-0">
            <circle cx="12" cy="18" r="12" fill="#fbbf12" />
            <path d="M12 18 1.600 12A12 12 0 0 1 22.400 12z" fill="#e33b2e" />
            <path d="M12 18 1.600 12A12 12 0 0 0 12 30l5-9z" fill="#2a9d4a" />
            <circle cx="12" cy="18" r="5.800" fill="#fff" />
            <circle cx="12" cy="18" r="4.600" fill="#2f7de8" />
            <circle cx="21.500" cy="8" r="8" fill="#7a1fa2" />
            <text x="21.500" y="11" fontSize="8" textAnchor="middle" fill="#fff">찬희</text>
            <circle cx="18.500" cy="23" r="6" fill="#7a1fa2" />
            <text x="18.500" y="25.500" fontSize="6" textAnchor="middle" fill="#fff">찬희</text>
          </svg>
        </TaskItem>
        <TaskItem label="카카오톡" mark="w-[6px] bg-[#c8221c]" tile="bg-[#fde4e6] shadow-[3px_0_0_#f8dfe6]">
          <svg width="24" height="24" viewBox="0 0 24 24">
            <path d="M0 0h24v24H0z" fill="#fbe300" />
            <path d="M12 3.500c5.500 0 9.500 3.300 9.500 7.300s-4 7.200-9.500 7.200h-1.500L7 21v-4c-3-1.300-4.500-3.500-4.500-6.200 0-4 4-7.300 9.500-7.300z" fill="#391b1b" />
            <text x="12" y="13.500" fontSize="6.500" fontWeight="700" textAnchor="middle" fill="#fbe300">TALK</text>
          </svg>
        </TaskItem>
        <TaskItem label="텔레그램" mark="w-[6px] bg-[#808894]">
          <svg width="22" height="22" viewBox="0 0 22 22" className="mb-px">
            <circle cx="11" cy="11" r="11" fill="#2a9fdb" />
            <path d="m4 10.800 12.500-5-2.300 11-3.500-2.500-2 2-.4-3.300 5-4.800-6.300 4z" fill="#fff" />
          </svg>
        </TaskItem>
        <TaskItem label="Excel" mark="w-4 bg-[#0f78d4]" tile="bg-[#ebf1fc] shadow-[3px_0_0_#e3eaf8]">
          <ExcelLogo size={24} />
        </TaskItem>
      </div>
      <div className="flex items-center justify-end pr-5 pb-px">
        <button type="button" aria-label="숨겨진 아이콘 표시"><svg width="11" height="7" viewBox="0 0 11 7" fill="none" stroke="#222" strokeWidth="1.300"><path d="m.5 6 5-5 5 5" /></svg></button>
        <svg width="12" height="16" viewBox="0 0 12 16" fill="none" stroke="#222" strokeWidth="1.200" className="ml-[21px]" aria-label="영문 입력"><path d="M.5 15.500 6 1l5.500 14.500M2.500 10.500h7" /></svg>
        <svg width="16" height="12" viewBox="0 0 16 12" fill="none" stroke="#222" strokeWidth="1.100" className="ml-[18px]">
          <path d="M.5 4.500a10.600 10.600 0 0 1 15 0M3 7a7 7 0 0 1 10 0M5.300 9.200a3.800 3.800 0 0 1 5.400 0" />
          <circle cx="8" cy="10.800" r="1" fill="#222" />
        </svg>
        <svg width="17" height="14" viewBox="0 0 17 14" fill="none" stroke="#222" strokeWidth="1.100" className="ml-2">
          <path d="M.6 4.500h2.500L6.500 1.500v11L3.100 9.500H.6zM8.500 4.500c1.300 1.500 1.300 3.500 0 5" />
          <path d="M11 3c2.500 2.500 2.500 5.500 0 8M13.500 1.500c3 3.500 3 7.500 0 11" stroke="#b0b8c4" />
        </svg>
        <time className="ml-4 flex flex-col text-right leading-4 text-[#111]">
          <span>오후 <span className="text-xs">2:46</span></span>
          <span className="text-xs leading-4">2023-05-18</span>
        </time>
        <button type="button" className="ml-[11px] h-4 w-4 rounded-full bg-[#0067c0] text-[10px] leading-4 text-white">2</button>
      </div>
    </div>
  );
}

export default function App() {
  return (
    <div className="flex h-screen min-h-0 flex-col overflow-hidden bg-[#efefef] font-['Open_Sans','Noto_Sans_CJK_KR',sans-serif] text-[13px] leading-4 text-[#262626]">
      <TitleBar />
      <TabRow />
      <Ribbon />
      <FormulaBar />
      <div className="mt-[7px] flex min-h-0 flex-1">
        <Sheet />
        <VerticalScroll />
      </div>
      <SheetTabs />
      <StatusBar />
      <Taskbar />
    </div>
  );
}
